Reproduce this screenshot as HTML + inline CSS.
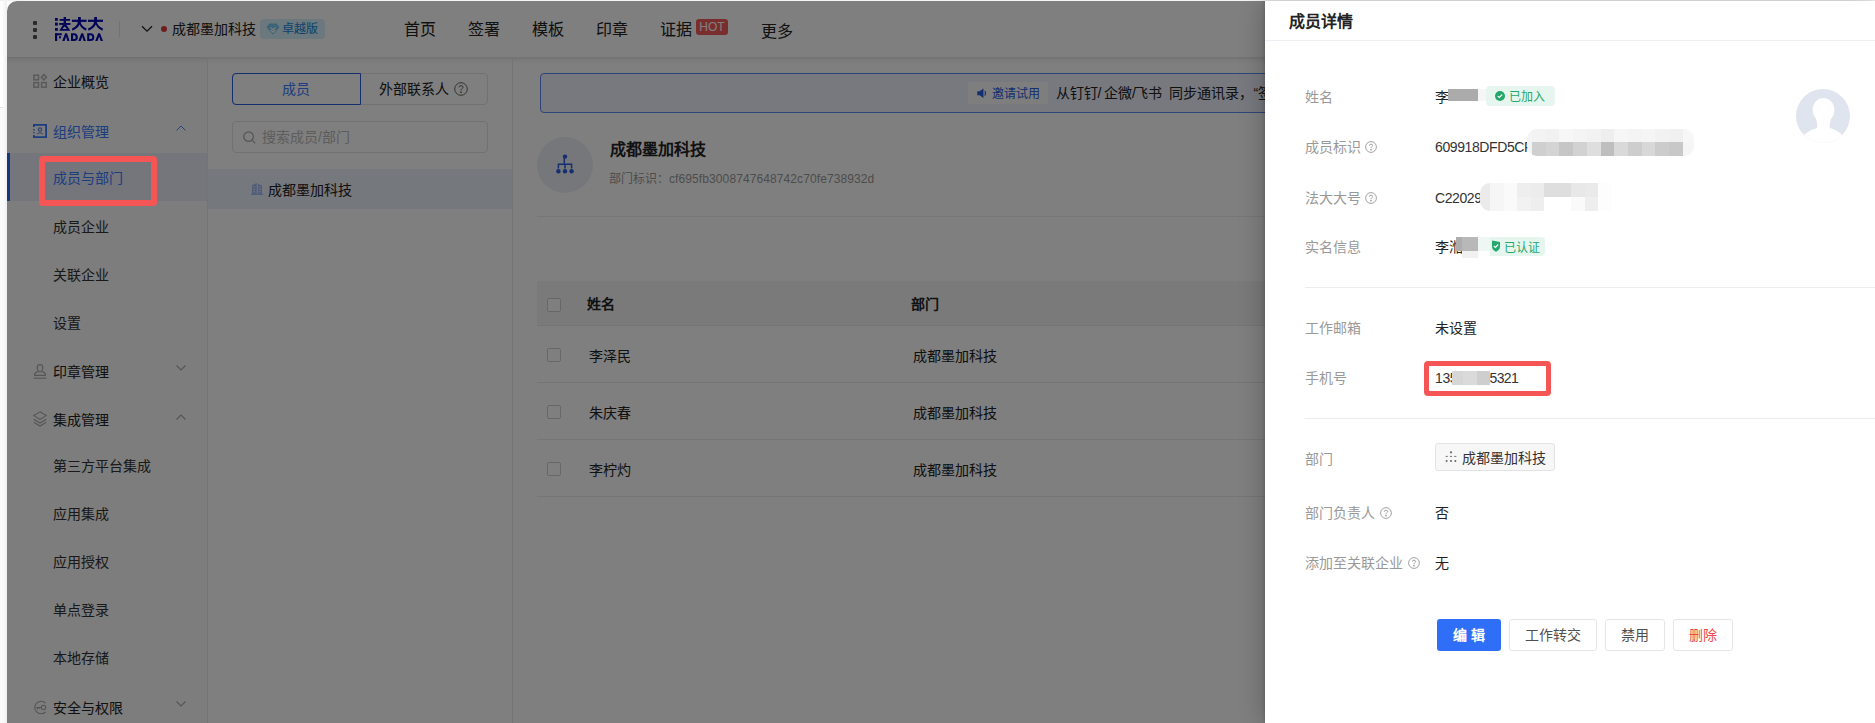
<!DOCTYPE html>
<html lang="zh-CN"><head><meta charset="utf-8">
<style>
*{box-sizing:border-box;margin:0;padding:0}
html,body{width:1875px;height:723px;overflow:hidden;background:#fff;font-family:"Liberation Sans",sans-serif;color:#333;font-size:14px}
.a{position:absolute;white-space:nowrap}
.st{-webkit-text-stroke:0.05px currentColor}
svg.a{overflow:visible}
</style></head><body>
<div class="a" style="left:0px;top:0px;width:1875px;height:1px;background:#f4f4f4"></div>
<div class="a" style="left:3px;top:1px;width:4px;height:722px;background:linear-gradient(to right,#fbfbfb,#efefef)"></div>
<div class="a" style="left:0px;top:107px;width:3px;height:1px;background:#dfe2df"></div>
<div class="a" style="left:0px;top:108px;width:3px;height:615px;background:#fafafa"></div>
<div class="a" style="left:7px;top:1px;width:1868px;height:722px;background:#fff;border-top-left-radius:10px"></div>
<div class="a" style="left:7px;top:57px;width:200px;height:666px;background:#fafafa"></div>
<div class="a" style="left:7px;top:57px;width:1868px;height:7px;background:linear-gradient(to bottom,rgba(0,0,0,.11),rgba(0,0,0,.04) 40%,rgba(0,0,0,0))"></div>
<div class="a" style="left:207px;top:57px;width:1px;height:666px;background:#e8e8e8"></div>
<div class="a" style="left:512px;top:57px;width:1px;height:666px;background:#e8e8e8"></div>
<div class="a" style="left:33px;top:21px;width:4px;height:4px;background:#555;border-radius:1px"></div>
<div class="a" style="left:33px;top:28px;width:4px;height:4px;background:#555;border-radius:1px"></div>
<div class="a" style="left:33px;top:35px;width:4px;height:4px;background:#555;border-radius:1px"></div>
<svg class="a" style="left:55px;top:17px" width="49" height="25" viewBox="0 0 49 25" fill="#0408b0">
<rect x="0" y="1" width="2.8" height="2.8"/><rect x="0" y="5.6" width="2.8" height="3"/><rect x="0" y="11" width="2.8" height="2.8"/>
<rect x="4.6" y="2" width="10.5" height="1.8"/><rect x="8.6" y="0" width="2.4" height="6.5"/><rect x="4.2" y="6" width="11.2" height="1.9"/>
<path d="M8 7.8 L11.3 7.8 L15.4 13.8 L4.2 13.8 Z M9.6 9.6 L7.4 11.9 L12 11.9 Z" fill-rule="evenodd"/>
<rect x="16.9" y="2.7" width="14.7" height="2.2"/><rect x="23" y="0" width="2.8" height="5"/>
<path d="M23 4.5 L25.8 4.5 Q25 10 17.5 13.8 L16.9 11.6 Q22.5 9 23 4.5 Z"/><path d="M25.5 4.5 Q26.5 9.5 31.6 11.6 L31 13.8 Q24.5 10.5 23.5 4.5 Z"/>
<rect x="33" y="2.7" width="15" height="2.2"/><rect x="39.2" y="0" width="2.8" height="5"/>
<path d="M39.2 4.5 L42 4.5 Q41.2 10 33.6 13.8 L33 11.6 Q38.7 9 39.2 4.5 Z"/><path d="M41.7 4.5 Q42.7 9.5 48 11.6 L47.4 13.8 Q40.7 10.5 39.7 4.5 Z"/>
<rect x="0" y="16.3" width="2.2" height="7.7"/><rect x="0" y="16.3" width="6.8" height="2"/><rect x="4" y="19.3" width="2" height="2"/>
<path d="M10.2 16.3 L12 16.3 L14.6 24 L12.3 24 L11.1 19.5 L9.6 24 L7.2 24 Z"/>
<path d="M16 16.3 L19 16.3 Q22.8 16.3 22.8 20.15 Q22.8 24 19 24 L16 24 Z M18.1 18.2 L18.1 22.1 L19 22.1 Q20.7 22.1 20.7 20.15 Q20.7 18.2 19 18.2 Z" fill-rule="evenodd"/>
<path d="M26.3 16.3 L28.1 16.3 L30.9 24 L28.6 24 L27.2 19.5 L25.7 24 L23.3 24 Z"/>
<path d="M32.2 16.3 L35.4 16.3 Q39.3 16.3 39.3 20.15 Q39.3 24 35.4 24 L32.2 24 Z M34.3 18.2 L34.3 22.1 L35.4 22.1 Q37.2 22.1 37.2 20.15 Q37.2 18.2 35.4 18.2 Z" fill-rule="evenodd"/>
<path d="M43.2 16.3 L45 16.3 L48 24 L45.7 24 L44.1 19.5 L42.6 24 L40.2 24 Z"/>
</svg>
<div class="a" style="left:119px;top:21px;width:1px;height:16px;background:#e4e4e4"></div>
<svg class="a" style="left:141px;top:25px" width="12" height="8" viewBox="0 0 12 8"><path d="M1 1.2 L6 6.2 L11 1.2" fill="none" stroke="#222" stroke-width="1.3"/></svg>
<div class="a" style="left:161px;top:26px;width:6px;height:6px;background:#e03a3a;border-radius:50%"></div>
<div class="a st" style="left:172.0px;top:19.0px;font-size:14px;line-height:20px;color:#222;font-weight:normal;">成都墨加科技</div>
<div class="a" style="left:260px;top:19px;width:65px;height:20px;background:#d6f1fb;border-radius:4px"></div>
<svg class="a" style="left:266px;top:22px" width="14" height="14" viewBox="0 0 14 14"><path d="M3.2 1.5 H10.8 L13.5 5.2 L7 12.8 L0.5 5.2 Z" fill="#7ccbef"/><path d="M4.6 5.4 L7 7.8 L9.4 5.4 M4.6 8 L7 10.2 L9.4 8" fill="none" stroke="#fff" stroke-width="1.1"/></svg>
<div class="a st" style="left:282.0px;top:19.0px;font-size:12px;line-height:20px;color:#1684d8;font-weight:normal;">卓越版</div>
<div class="a st" style="left:404.0px;top:20.3px;font-size:16px;line-height:20px;color:#222;font-weight:normal;">首页</div>
<div class="a st" style="left:468.0px;top:20.3px;font-size:16px;line-height:20px;color:#222;font-weight:normal;">签署</div>
<div class="a st" style="left:532.0px;top:20.3px;font-size:16px;line-height:20px;color:#222;font-weight:normal;">模板</div>
<div class="a st" style="left:596.0px;top:20.3px;font-size:16px;line-height:20px;color:#222;font-weight:normal;">印章</div>
<div class="a st" style="left:660.0px;top:20.3px;font-size:16px;line-height:20px;color:#222;font-weight:normal;">证据</div>
<div class="a" style="left:696px;top:19px;width:32px;height:16px;background:#f45a5a;border-radius:3px"></div>
<div class="a" style="left:696px;top:19px;width:32px;height:16px;font-size:12px;line-height:16px;color:#fff;text-align:center">HOT</div>
<div class="a st" style="left:761.0px;top:21.5px;font-size:16px;line-height:20px;color:#222;font-weight:normal;">更多</div>
<div class="a" style="left:7px;top:153px;width:200px;height:48px;background:#e8edf8"></div>
<div class="a" style="left:7px;top:153px;width:3px;height:48px;background:#2f6ff8"></div>
<svg class="a" style="left:33px;top:74px" width="14" height="14" viewBox="0 0 14 14" fill="none" stroke="#b0b0b0" stroke-width="1.4"><rect x="0.9" y="1.2" width="4.6" height="4.6"/><rect x="0.9" y="8.6" width="4.6" height="4.6"/><rect x="8.6" y="8.6" width="4.6" height="4.6"/><path d="M10.9 0.6 L13.4 3.3 L10.9 6 L8.4 3.3 Z"/></svg>
<div class="a st" style="left:53.0px;top:71.5px;font-size:14px;line-height:20px;color:#222;font-weight:normal;">企业概览</div>
<svg class="a" style="left:33px;top:124px" width="14" height="14" viewBox="0 0 14 14" fill="none" stroke="#3a7bff" stroke-width="1.8"><path d="M0.9 3 V0.9 H13.1 V13.1 H0.9 V11"/><path d="M0.9 5.2 V6.4 M0.9 8.3 V9.2"/><circle cx="7" cy="5.6" r="1.7" stroke-width="1.1" stroke="#5a86e8"/><path d="M4.3 10.2 Q7 7.4 9.7 10.2" stroke-width="1.1" stroke="#5a86e8"/></svg>
<div class="a st" style="left:53.0px;top:121.8px;font-size:14px;line-height:20px;color:#3a7bff;font-weight:normal;">组织管理</div>
<svg class="a" style="left:176px;top:125px" width="10" height="6" viewBox="0 0 10 6"><path d="M0.5 5.5 L5 1 L9.5 5.5" fill="none" stroke="#3a7bff" stroke-width="0.9"/></svg>
<div class="a st" style="left:53.0px;top:168.0px;font-size:14px;line-height:20px;color:#3a7bff;font-weight:normal;">成员与部门</div>
<div class="a st" style="left:53.0px;top:216.6px;font-size:14px;line-height:20px;color:#333;font-weight:normal;">成员企业</div>
<div class="a st" style="left:53.0px;top:264.7px;font-size:14px;line-height:20px;color:#333;font-weight:normal;">关联企业</div>
<div class="a st" style="left:53.0px;top:312.7px;font-size:14px;line-height:20px;color:#333;font-weight:normal;">设置</div>
<svg class="a" style="left:33px;top:364px" width="14" height="15" viewBox="0 0 14 15" fill="none" stroke="#aaa" stroke-width="1.1"><path d="M5.2 7.8 V6.3 Q4 5.2 4.2 3.4 A2.8 2.8 0 0 1 9.8 3.4 Q10 5.2 8.8 6.3 V7.8"/><path d="M1.6 11.4 Q1.6 8.3 4.6 7.8 H9.4 Q12.4 8.3 12.4 11.4 Z"/><path d="M0.5 14.2 H13.5"/></svg>
<div class="a st" style="left:53.0px;top:361.8px;font-size:14px;line-height:20px;color:#222;font-weight:normal;">印章管理</div>
<svg class="a" style="left:176px;top:365px" width="10" height="6" viewBox="0 0 10 6"><path d="M0.5 0.5 L5 5 L9.5 0.5" fill="none" stroke="#aaa" stroke-width="1.1"/></svg>
<svg class="a" style="left:33px;top:411px" width="14" height="16" viewBox="0 0 14 16" fill="none" stroke="#aaa" stroke-width="1.1"><path d="M7 0.8 L13.2 4.6 L7 8.4 L0.8 4.6 Z"/><path d="M0.8 8.2 L7 12 L13.2 8.2"/><path d="M0.8 11.2 L7 15 L13.2 11.2"/></svg>
<div class="a st" style="left:53.0px;top:410.0px;font-size:14px;line-height:20px;color:#222;font-weight:normal;">集成管理</div>
<svg class="a" style="left:176px;top:414px" width="10" height="6" viewBox="0 0 10 6"><path d="M0.5 5.5 L5 1 L9.5 5.5" fill="none" stroke="#aaa" stroke-width="1.1"/></svg>
<div class="a st" style="left:53.0px;top:456.0px;font-size:14px;line-height:20px;color:#333;font-weight:normal;">第三方平台集成</div>
<div class="a st" style="left:53.0px;top:504.0px;font-size:14px;line-height:20px;color:#333;font-weight:normal;">应用集成</div>
<div class="a st" style="left:53.0px;top:552.0px;font-size:14px;line-height:20px;color:#333;font-weight:normal;">应用授权</div>
<div class="a st" style="left:53.0px;top:600.0px;font-size:14px;line-height:20px;color:#333;font-weight:normal;">单点登录</div>
<div class="a st" style="left:53.0px;top:648.0px;font-size:14px;line-height:20px;color:#333;font-weight:normal;">本地存储</div>
<svg class="a" style="left:33px;top:700px" width="15" height="15" viewBox="0 0 15 15" fill="none" stroke="#aaa" stroke-width="1.1"><path d="M12.5 3 A6.3 6.3 0 1 0 12.5 12"/><circle cx="10.5" cy="7.5" r="2.2"/><path d="M3 7.5 H8.3 M4.5 7.5 V9.5 M6.2 7.5 V9"/></svg>
<div class="a st" style="left:53.0px;top:698.0px;font-size:14px;line-height:20px;color:#222;font-weight:normal;">安全与权限</div>
<svg class="a" style="left:176px;top:701px" width="10" height="6" viewBox="0 0 10 6"><path d="M0.5 0.5 L5 5 L9.5 0.5" fill="none" stroke="#aaa" stroke-width="1.1"/></svg>
<div class="a" style="left:232px;top:73px;width:256px;height:32px;border:1px solid #e3e3e3;border-radius:4px"></div>
<div class="a" style="left:232px;top:73px;width:129px;height:32px;border:1px solid #2a5cdc;border-radius:4px 0 0 4px"></div>
<div class="a st" style="left:281.5px;top:78.8px;font-size:14px;line-height:20px;color:#3a7bff;font-weight:normal;">成员</div>
<div class="a st" style="left:379.0px;top:78.5px;font-size:14px;line-height:20px;color:#222;font-weight:normal;">外部联系人</div>
<svg class="a" style="left:454px;top:81.5px" width="14" height="14" viewBox="0 0 14 14" fill="none" stroke="#666" stroke-width="1"><circle cx="7" cy="7" r="6.3"/><path d="M5 5.4 Q5 3.6 7 3.6 Q9 3.6 9 5.3 Q9 6.4 7.6 7 Q7 7.3 7 8.6"/><circle cx="7" cy="10.3" r="0.5" fill="#666"/></svg>
<div class="a" style="left:232px;top:121px;width:256px;height:32px;border:1px solid #e3e3e3;border-radius:4px"></div>
<svg class="a" style="left:243px;top:131px" width="13" height="13" viewBox="0 0 13 13" fill="none" stroke="#aaa" stroke-width="1.2"><circle cx="5.6" cy="5.6" r="4.8"/><path d="M9.2 9.2 L12.3 12.3"/></svg>
<div class="a st" style="left:262.0px;top:127.0px;font-size:14px;line-height:20px;color:#bbb;font-weight:normal;">搜索成员/部门</div>
<div class="a" style="left:208px;top:169px;width:304px;height:40px;background:#ebf0fb"></div>
<svg class="a" style="left:251px;top:183px" width="12" height="12" viewBox="0 0 12 12"><path d="M1 2.2 L5.8 0 V11 H1 Z M6.8 0.8 L11 2.4 V11 H6.8 Z M0 10.8 H12 V12 H0 Z" fill="#a3bcf2"/><g fill="#e6edfd"><rect x="2.6" y="3.4" width="1.4" height="1.2"/><rect x="2.6" y="5.8" width="1.4" height="1.2"/><rect x="2.6" y="8.1" width="1.4" height="1.2"/><rect x="8.2" y="3.4" width="1.4" height="1.2"/><rect x="8.2" y="5.8" width="1.4" height="1.2"/><rect x="8.2" y="8.1" width="1.4" height="1.2"/></g></svg>
<div class="a st" style="left:267.5px;top:179.5px;font-size:14px;line-height:20px;color:#222;font-weight:normal;">成都墨加科技</div>
<div class="a" style="left:540px;top:73px;width:760px;height:40px;border:1px solid #5a8af0;border-radius:4px;background:#eef3fe"></div>
<div class="a" style="left:968px;top:82px;width:80px;height:22px;background:#fdfdfd;border-radius:2px"></div>
<svg class="a" style="left:977px;top:88px" width="11" height="10" viewBox="0 0 11 10.5" fill="#2b5de0"><path d="M0 3.5 H2.5 L6.5 0.5 V10.5 L2.5 7.5 H0 Z"/><path d="M8 3 Q9.5 5.5 8 8" fill="none" stroke="#2b5de0" stroke-width="1.2"/></svg>
<div class="a st" style="left:992.0px;top:84.0px;font-size:12px;line-height:20px;color:#2b5de0;font-weight:normal;">邀请试用</div>
<div class="a st" style="left:1055.5px;top:83.2px;font-size:14px;line-height:20px;color:#222;font-weight:normal;">从钉钉/</div>
<div class="a st" style="left:1104.0px;top:83.2px;font-size:14px;line-height:20px;color:#222;font-weight:normal;">企微/</div>
<div class="a st" style="left:1133.5px;top:83.2px;font-size:14px;line-height:20px;color:#222;font-weight:normal;">飞书</div>
<div class="a st" style="left:1168.7px;top:83.2px;font-size:14px;line-height:20px;color:#222;font-weight:normal;">同步通讯录，</div>
<div class="a" style="left:1253.5px;top:83.2px;font-size:14px;line-height:20px;color:#222;font-weight:normal;"><span style="font-family:'Liberation Sans'">&#8220;</span></div>
<div class="a st" style="left:1257.5px;top:83.2px;font-size:14px;line-height:20px;color:#222;font-weight:normal;">签署</div>
<div class="a" style="left:537px;top:137px;width:56px;height:56px;background:#eaeef5;border-radius:50%"></div>
<svg class="a" style="left:556px;top:154px" width="18" height="20" viewBox="0 0 18 20" fill="#2b5de0"><circle cx="9" cy="2.6" r="2.2"/><circle cx="2.4" cy="17.2" r="2.2"/><circle cx="9" cy="17.2" r="2.2"/><circle cx="15.6" cy="17.2" r="2.2"/><path d="M8.3 4 V11" stroke="#2b5de0" stroke-width="1.5"/><path d="M2.4 14.5 V10.3 H15.6 V14.5" fill="none" stroke="#2b5de0" stroke-width="1.5"/><path d="M9 10.3 V14.5" stroke="#2b5de0" stroke-width="1.5"/></svg>
<div class="a" style="left:609.5px;top:140.0px;font-size:16px;line-height:20px;color:#222;font-weight:bold;">成都墨加科技</div>
<div class="a" style="left:608.5px;top:169.0px;font-size:12px;line-height:20px;color:#999;font-weight:normal;letter-spacing:0.1px">部门标识：cf695fb3008747648742c70fe738932d</div>
<div class="a" style="left:537px;top:216px;width:728px;height:1px;background:#ececec"></div>
<div class="a" style="left:537px;top:281px;width:728px;height:44px;background:#f4f5f7"></div>
<div class="a" style="left:537px;top:325px;width:728px;height:1px;background:#ebebeb"></div>
<div class="a" style="left:547px;top:298px;width:14px;height:14px;border:1px solid #cfcfcf;border-radius:2px;background:#fff"></div>
<div class="a" style="left:587.0px;top:294.0px;font-size:14px;line-height:20px;color:#222;font-weight:bold;">姓名</div>
<div class="a" style="left:911.0px;top:294.0px;font-size:14px;line-height:20px;color:#222;font-weight:bold;">部门</div>
<div class="a" style="left:547px;top:348px;width:14px;height:14px;border:1px solid #cfcfcf;border-radius:2px;background:#fff"></div>
<div class="a st" style="left:589.0px;top:345.8px;font-size:14px;line-height:20px;color:#222;font-weight:normal;">李泽民</div>
<div class="a st" style="left:912.5px;top:345.8px;font-size:14px;line-height:20px;color:#222;font-weight:normal;">成都墨加科技</div>
<div class="a" style="left:537px;top:382px;width:728px;height:1px;background:#ebebeb"></div>
<div class="a" style="left:547px;top:405px;width:14px;height:14px;border:1px solid #cfcfcf;border-radius:2px;background:#fff"></div>
<div class="a st" style="left:589.0px;top:402.8px;font-size:14px;line-height:20px;color:#222;font-weight:normal;">朱庆春</div>
<div class="a st" style="left:912.5px;top:402.8px;font-size:14px;line-height:20px;color:#222;font-weight:normal;">成都墨加科技</div>
<div class="a" style="left:537px;top:439px;width:728px;height:1px;background:#ebebeb"></div>
<div class="a" style="left:547px;top:462px;width:14px;height:14px;border:1px solid #cfcfcf;border-radius:2px;background:#fff"></div>
<div class="a st" style="left:589.0px;top:459.8px;font-size:14px;line-height:20px;color:#222;font-weight:normal;">李柠灼</div>
<div class="a st" style="left:912.5px;top:459.8px;font-size:14px;line-height:20px;color:#222;font-weight:normal;">成都墨加科技</div>
<div class="a" style="left:537px;top:496px;width:728px;height:1px;background:#ebebeb"></div>
<div class="a" style="left:7px;top:1px;width:1868px;height:722px;background:rgba(0,0,0,.5);border-top-left-radius:10px"></div>
<div class="a" style="left:1265px;top:1px;width:610px;height:722px;box-shadow:-1px 0 3px rgba(0,0,0,.14),-4px 0 22px rgba(0,0,0,.2)"></div>
<div class="a" style="left:1265px;top:1px;width:610px;height:722px;background:#fff"></div>
<div class="a" style="left:1289.0px;top:11.8px;font-size:16px;line-height:20px;color:#222;font-weight:bold;">成员详情</div>
<div class="a" style="left:1265px;top:40px;width:610px;height:1px;background:#eceef3"></div>
<div class="a" style="left:1305.0px;top:86.8px;font-size:14px;line-height:20px;color:#999;font-weight:normal;">姓名</div>
<div class="a" style="left:1305.0px;top:137.2px;font-size:14px;line-height:20px;color:#999;font-weight:normal;">成员标识</div>
<svg class="a" style="left:1365px;top:141px" width="12" height="12" viewBox="0 0 12 12" fill="none" stroke="#999" stroke-width="0.9"><circle cx="6" cy="6" r="5.4"/><path d="M4.4 4.7 Q4.4 3.2 6 3.2 Q7.6 3.2 7.6 4.6 Q7.6 5.5 6.5 6 Q6 6.3 6 7.3"/><circle cx="6" cy="8.8" r="0.45" fill="#999"/></svg>
<div class="a" style="left:1305.0px;top:187.5px;font-size:14px;line-height:20px;color:#999;font-weight:normal;">法大大号</div>
<svg class="a" style="left:1365px;top:191.5px" width="12" height="12" viewBox="0 0 12 12" fill="none" stroke="#999" stroke-width="0.9"><circle cx="6" cy="6" r="5.4"/><path d="M4.4 4.7 Q4.4 3.2 6 3.2 Q7.6 3.2 7.6 4.6 Q7.6 5.5 6.5 6 Q6 6.3 6 7.3"/><circle cx="6" cy="8.8" r="0.45" fill="#999"/></svg>
<div class="a" style="left:1305.0px;top:237.0px;font-size:14px;line-height:20px;color:#999;font-weight:normal;">实名信息</div>
<div class="a" style="left:1435.0px;top:86.8px;font-size:14px;line-height:20px;color:#222;font-weight:normal;">李</div>
<div class="a" style="left:1448px;top:89px;width:30px;height:12px;background:#ababab"></div>
<div class="a" style="left:1478px;top:89px;width:8px;height:12px;background:#f6f6f6"></div>
<div class="a" style="left:1486px;top:86px;width:69px;height:20px;background:#e6f6ef;border-radius:4px"></div>
<svg class="a" style="left:1495px;top:91px" width="10" height="10" viewBox="0 0 10 10"><circle cx="5" cy="5" r="5" fill="#25a86b"/><path d="M2.8 5.1 L4.3 6.5 L7.2 3.6" fill="none" stroke="#fff" stroke-width="1.2"/></svg>
<div class="a" style="left:1508.5px;top:86.5px;font-size:12px;line-height:20px;color:#25a86b;font-weight:normal;">已加入</div>
<div class="a" style="left:1435.0px;top:137.0px;font-size:14px;line-height:20px;color:#333;font-weight:normal;letter-spacing:-0.4px">609918DFD5CF</div>
<div class="a" style="left:1527px;top:129px;width:167px;height:27px;border-radius:10px;overflow:hidden;background:#f4f4f4"><div class="a" style="left:5px;top:0;width:14px;height:13px;background:#f3f3f3"></div><div class="a" style="left:5px;top:13px;width:14px;height:14px;background:#cfcfcf"></div><div class="a" style="left:18.7px;top:0;width:14px;height:13px;background:#f1f1f1"></div><div class="a" style="left:18.7px;top:13px;width:14px;height:14px;background:#d4d4d4"></div><div class="a" style="left:32.4px;top:0;width:14px;height:13px;background:#f7f7f7"></div><div class="a" style="left:32.4px;top:13px;width:14px;height:14px;background:#c6c6c6"></div><div class="a" style="left:46.099999999999994px;top:0;width:14px;height:13px;background:#f4f4f4"></div><div class="a" style="left:46.099999999999994px;top:13px;width:14px;height:14px;background:#d2d2d2"></div><div class="a" style="left:59.8px;top:0;width:14px;height:13px;background:#f2f2f2"></div><div class="a" style="left:59.8px;top:13px;width:14px;height:14px;background:#dedede"></div><div class="a" style="left:73.5px;top:0;width:14px;height:13px;background:#eeeeee"></div><div class="a" style="left:73.5px;top:13px;width:14px;height:14px;background:#bebebe"></div><div class="a" style="left:87.2px;top:0;width:14px;height:13px;background:#f6f6f6"></div><div class="a" style="left:87.2px;top:13px;width:14px;height:14px;background:#d9d9d9"></div><div class="a" style="left:100.9px;top:0;width:14px;height:13px;background:#f4f4f4"></div><div class="a" style="left:100.9px;top:13px;width:14px;height:14px;background:#cdcdcd"></div><div class="a" style="left:114.60000000000001px;top:0;width:14px;height:13px;background:#f5f5f5"></div><div class="a" style="left:114.60000000000001px;top:13px;width:14px;height:14px;background:#d8d8d8"></div><div class="a" style="left:128.3px;top:0;width:14px;height:13px;background:#f2f2f2"></div><div class="a" style="left:128.3px;top:13px;width:14px;height:14px;background:#cccccc"></div><div class="a" style="left:142.0px;top:0;width:14px;height:13px;background:#f0f0f0"></div><div class="a" style="left:142.0px;top:13px;width:14px;height:14px;background:#c8c8c8"></div><div class="a" style="left:155.7px;top:0;width:14px;height:13px;background:#f7f7f7"></div><div class="a" style="left:155.7px;top:13px;width:14px;height:14px;background:#f5f5f5"></div></div>
<div class="a" style="left:1435.0px;top:187.5px;font-size:14px;line-height:20px;color:#333;font-weight:normal;letter-spacing:-0.4px">C22029</div>
<div class="a" style="left:1480px;top:183px;width:134px;height:28px;border-radius:10px 0 0 10px;overflow:hidden"><div class="a" style="left:0px;top:0;width:10.5px;height:14px;background:#ebebeb"></div><div class="a" style="left:0px;top:14px;width:10.5px;height:14px;background:#ebebeb"></div><div class="a" style="left:10px;top:0;width:14.0px;height:14px;background:#f6f6f6"></div><div class="a" style="left:10px;top:14px;width:14.0px;height:14px;background:#f6f6f6"></div><div class="a" style="left:23.5px;top:0;width:14.0px;height:14px;background:#fafafa"></div><div class="a" style="left:23.5px;top:14px;width:14.0px;height:14px;background:#fafafa"></div><div class="a" style="left:37.0px;top:0;width:14.0px;height:14px;background:#eeeeee"></div><div class="a" style="left:37.0px;top:14px;width:14.0px;height:14px;background:#f2f2f2"></div><div class="a" style="left:50.5px;top:0;width:14.0px;height:14px;background:#ececec"></div><div class="a" style="left:50.5px;top:14px;width:14.0px;height:14px;background:#eeeeee"></div><div class="a" style="left:64.0px;top:0;width:14.0px;height:14px;background:#dedede"></div><div class="a" style="left:64.0px;top:14px;width:14.0px;height:14px;background:#ffffff"></div><div class="a" style="left:77.5px;top:0;width:14.0px;height:14px;background:#dedede"></div><div class="a" style="left:77.5px;top:14px;width:14.0px;height:14px;background:#ffffff"></div><div class="a" style="left:91.0px;top:0;width:14.0px;height:14px;background:#e8e8e8"></div><div class="a" style="left:91.0px;top:14px;width:14.0px;height:14px;background:#fafafa"></div><div class="a" style="left:104.5px;top:0;width:14.0px;height:14px;background:#eaeaea"></div><div class="a" style="left:104.5px;top:14px;width:14.0px;height:14px;background:#eeeeee"></div><div class="a" style="left:118.0px;top:0;width:14.0px;height:14px;background:#fdfdfd"></div><div class="a" style="left:118.0px;top:14px;width:14.0px;height:14px;background:#fdfdfd"></div></div>
<div class="a" style="left:1435.0px;top:236.7px;font-size:14px;line-height:20px;color:#222;font-weight:normal;">李湉</div>
<div class="a" style="left:1456px;top:237px;width:6px;height:14px;background:#adadad"></div>
<div class="a" style="left:1462px;top:237px;width:16px;height:14px;background:#b8b8b8"></div>
<div class="a" style="left:1478px;top:237px;width:12px;height:14px;background:#eef7f3"></div>
<div class="a" style="left:1462px;top:251px;width:16px;height:7px;background:#f1f1f1"></div>
<div class="a" style="left:1490px;top:237px;width:55px;height:19px;background:#e6f6ef;border-radius:0 4px 4px 0"></div>
<svg class="a" style="left:1491px;top:240px" width="10" height="12" viewBox="0 0 10 12"><path d="M1 0.5 L9 2 V6.5 Q9 10 5 11.8 Q1 10 1 6.5 Z" fill="#25a86b"/><path d="M2.8 6 L4.4 7.5 L7.2 4.5" fill="none" stroke="#fff" stroke-width="1.1"/></svg>
<div class="a" style="left:1504.0px;top:237.5px;font-size:12px;line-height:20px;color:#25a86b;font-weight:normal;">已认证</div>
<svg class="a" style="left:1796px;top:89px" width="54" height="54" viewBox="0 0 54 54"><defs><clipPath id="cc"><circle cx="27" cy="27" r="27"/></clipPath></defs><circle cx="27" cy="27" r="27" fill="#dfe4ee"/><g clip-path="url(#cc)" fill="#fff"><ellipse cx="27.5" cy="21" rx="10.8" ry="12"/><path d="M20 30 Q22 36 21 39 Q10 42 4 50 L6 56 H48 L50 50 Q44 42 34 39 Q33 36 35 30 Z"/></g></svg>
<div class="a" style="left:1305px;top:287px;width:570px;height:1px;background:#ececec"></div>
<div class="a" style="left:1305.0px;top:318.0px;font-size:14px;line-height:20px;color:#999;font-weight:normal;">工作邮箱</div>
<div class="a" style="left:1435.0px;top:318.0px;font-size:14px;line-height:20px;color:#222;font-weight:normal;">未设置</div>
<div class="a" style="left:1305.0px;top:368.0px;font-size:14px;line-height:20px;color:#999;font-weight:normal;">手机号</div>
<div class="a" style="left:1435.0px;top:368.0px;font-size:14px;line-height:20px;color:#333;font-weight:normal;letter-spacing:-0.4px">135</div>
<div class="a" style="left:1452px;top:371px;width:11px;height:14px;background:#d6d6d6"></div>
<div class="a" style="left:1463px;top:371px;width:14px;height:14px;background:#dadada"></div>
<div class="a" style="left:1477px;top:371px;width:13px;height:14px;background:#cecece"></div>
<div class="a" style="left:1489.5px;top:368.0px;font-size:14px;line-height:20px;color:#333;font-weight:normal;letter-spacing:-0.6px">5321</div>
<div class="a" style="left:1305px;top:418px;width:570px;height:1px;background:#ececec"></div>
<div class="a" style="left:1305.0px;top:448.8px;font-size:14px;line-height:20px;color:#999;font-weight:normal;">部门</div>
<div class="a" style="left:1435px;top:443px;width:120px;height:28px;background:#f7f7f7;border:1px solid #e3e3e3;border-radius:3px"></div>
<svg class="a" style="left:1445px;top:451px" width="12" height="12" viewBox="0 0 12 12" fill="#666"><circle cx="6" cy="1.3" r="1.1"/><rect x="0.6" y="4.9" width="2.2" height="0.9"/><rect x="4.9" y="4.9" width="2.2" height="0.9"/><rect x="9.2" y="4.9" width="2.2" height="0.9"/><circle cx="1.6" cy="9.9" r="1"/><circle cx="6" cy="9.9" r="1"/><circle cx="10.4" cy="9.9" r="1"/></svg>
<div class="a" style="left:1461.5px;top:447.8px;font-size:14px;line-height:20px;color:#333;font-weight:normal;">成都墨加科技</div>
<div class="a" style="left:1305.0px;top:503.3px;font-size:14px;line-height:20px;color:#999;font-weight:normal;">部门负责人</div>
<svg class="a" style="left:1379.5px;top:507.29999999999995px" width="12" height="12" viewBox="0 0 12 12" fill="none" stroke="#999" stroke-width="0.9"><circle cx="6" cy="6" r="5.4"/><path d="M4.4 4.7 Q4.4 3.2 6 3.2 Q7.6 3.2 7.6 4.6 Q7.6 5.5 6.5 6 Q6 6.3 6 7.3"/><circle cx="6" cy="8.8" r="0.45" fill="#999"/></svg>
<div class="a" style="left:1435.0px;top:503.3px;font-size:14px;line-height:20px;color:#222;font-weight:normal;">否</div>
<div class="a" style="left:1305.0px;top:553.3px;font-size:14px;line-height:20px;color:#999;font-weight:normal;">添加至关联企业</div>
<svg class="a" style="left:1408px;top:557.3px" width="12" height="12" viewBox="0 0 12 12" fill="none" stroke="#999" stroke-width="0.9"><circle cx="6" cy="6" r="5.4"/><path d="M4.4 4.7 Q4.4 3.2 6 3.2 Q7.6 3.2 7.6 4.6 Q7.6 5.5 6.5 6 Q6 6.3 6 7.3"/><circle cx="6" cy="8.8" r="0.45" fill="#999"/></svg>
<div class="a" style="left:1435.0px;top:553.3px;font-size:14px;line-height:20px;color:#222;font-weight:normal;">无</div>
<div class="a" style="left:1437px;top:619px;width:64px;height:32px;background:#2f6ef6;border-radius:3px;color:#fff;font-size:14px;line-height:32px;text-align:center;font-weight:600;letter-spacing:4px;text-indent:4px">编辑</div>
<div class="a" style="left:1509px;top:619px;width:88px;height:32px;border:1px solid #e6e6e6;border-radius:3px;color:#505050;font-size:14px;line-height:30px;text-align:center">工作转交</div>
<div class="a" style="left:1605px;top:619px;width:60px;height:32px;border:1px solid #e6e6e6;border-radius:3px;color:#505050;font-size:14px;line-height:30px;text-align:center">禁用</div>
<div class="a" style="left:1673px;top:619px;width:60px;height:32px;border:1px solid #e6e6e6;border-radius:3px;color:#f04646;font-size:14px;line-height:30px;text-align:center">删除</div>
<div class="a" style="left:39px;top:156px;width:118px;height:50px;border:6px solid #f55555;border-radius:4px"></div>
<div class="a" style="left:1424px;top:361px;width:127px;height:35px;border:5px solid #f55555;border-radius:4px"></div>
</body></html>
